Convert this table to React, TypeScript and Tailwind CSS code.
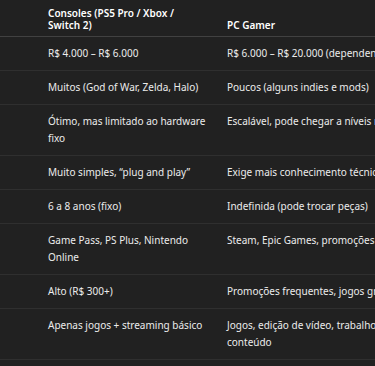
const rows: [string, string][] = [
  ["R$ 4.000 – R$ 6.000", "R$ 6.000 – R$ 20.000 (dependendo do setup)"],
  ["Muitos (God of War, Zelda, Halo)", "Poucos (alguns indies e mods)"],
  ["Ótimo, mas limitado ao hardware fixo", "Escalável, pode chegar a níveis máximos"],
  ["Muito simples, “plug and play”", "Exige mais conhecimento técnico"],
  ["6 a 8 anos (fixo)", "Indefinida (pode trocar peças)"],
  ["Game Pass, PS Plus, Nintendo Online", "Steam, Epic Games, promoções constantes"],
  ["Alto (R$ 300+)", "Promoções frequentes, jogos grátis"],
  ["Apenas jogos + streaming básico", "Jogos, edição de vídeo, trabalho, criação de conteúdo"],
];

export default function App() {
  return (
    <div
      className="h-[366px] w-[375px] overflow-hidden bg-[#212121] text-[10px] text-[#ececec]"
      style={{ fontFamily: '"Noto Sans", "Open Sans", sans-serif' }}
    >
      <table className="w-[475px] table-fixed border-collapse text-left">
        <colgroup>
          <col className="w-[40px]" />
          <col className="w-[179px]" />
          <col className="w-[256px]" />
        </colgroup>
        <thead>
          <tr className="border-b border-[#414141]">
            <th className="pt-[7px] pb-[5px]" />
            <th className="pl-2 pr-[13px] pt-[7px] pb-[5px] align-bottom font-semibold leading-[12px] text-white">
              Consoles (PS5 Pro / Xbox / Switch 2)
            </th>
            <th className="px-2 pt-[7px] pb-[5px] align-bottom font-semibold leading-[12px] text-white">
              PC Gamer
            </th>
          </tr>
        </thead>
        <tbody>
          {rows.map(([a, b]) => (
            <tr key={a} className="border-b border-[#2f2f2f]">
              <td className="py-2" />
              <td className="pl-2 pr-[13px] py-2 align-top leading-[17px]">{a}</td>
              <td className="px-2 py-2 align-top leading-[17px]">{b}</td>
            </tr>
          ))}
        </tbody>
      </table>
    </div>
  );
}
